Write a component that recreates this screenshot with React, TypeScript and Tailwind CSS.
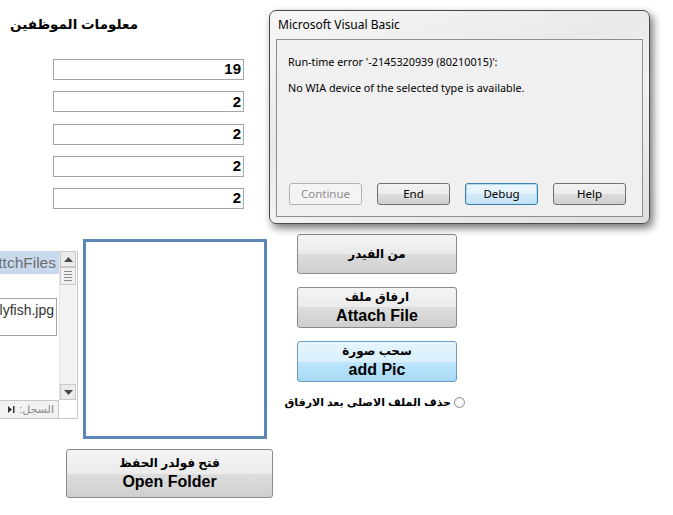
import React from 'react';

const arabic = { fontFamily: '"Liberation Sans", "DejaVu Sans", sans-serif' };
const segoe = { fontFamily: '"Noto Sans", "Open Sans", sans-serif' };

const AccessButton: React.FC<{ ar: string; en?: string; blue?: boolean; className?: string }> = ({ ar, en, blue, className }) => (
    <div
        className={`flex flex-col items-center justify-center rounded-[3px] border leading-none ${
            blue
                ? 'border-[#6a9cc4] bg-[linear-gradient(#e6f5fd_0%,#d9f0fc_50%,#bee6fd_50%,#a7d9f5_100%)]'
                : 'border-[#8a8a8a] bg-[linear-gradient(#f4f4f4_0%,#ebebeb_50%,#dddddd_50%,#cfcfcf_100%)]'
        } ${className ?? ''}`}
        style={arabic}
    >
        <span dir="rtl" className="text-[12px] font-bold text-black">{ar}</span>
        {en && <span className="mt-[5px] text-[16px] font-bold text-black">{en}</span>}
    </div>
);

const DialogButton: React.FC<{ label: string; disabled?: boolean; focused?: boolean }> = ({ label, disabled, focused }) => (
    <div
        className={`flex h-[22px] w-[73px] items-center justify-center rounded-[3px] border text-[11.5px] ${
            disabled
                ? 'border-[#adb2b5] bg-[#f4f4f4] text-[#8d8d8d]'
                : focused
                ? 'border-[#3c7fb1] bg-[linear-gradient(#eaf6fd_0%,#e3f2fb_50%,#d3ebf8_50%,#c4e3f5_100%)] text-black shadow-[inset_0_0_0_1px_#b5dcf0]'
                : 'border-[#707070] bg-[linear-gradient(#f2f2f2_0%,#ebebeb_50%,#dddddd_50%,#cfcfcf_100%)] text-black'
        }`}
    >
        {label}
    </div>
);

export default function App() {
    const values = ['19', '2', '2', '2', '2'];

    return (
        <div className="relative h-[515px] w-[673px] overflow-hidden bg-white">
            {/* Header + fields */}
            <div className="pl-[10px] pt-[14px]">
                <div dir="rtl" className="w-fit text-[13.5px] font-bold leading-[22px] text-black" style={arabic}>
                    معلومات الموظفين
                </div>
            </div>
            <div className="ml-[53px] mt-[23px] flex w-[191px] flex-col gap-[11.25px]">
                {values.map((v, i) => (
                    <div
                        key={i}
                        className="flex h-[21px] items-center justify-end border border-[#a5a5a5] pr-[2px] text-[15px] font-bold text-black"
                        style={arabic}
                    >
                        {v}
                    </div>
                ))}
            </div>

            {/* Lower section */}
            <div className="mt-[25px] flex items-start">
                {/* Subform list */}
                <div className="mt-[17px] flex h-[168px] w-[78px] flex-col border-b border-r border-[#c8c8c8]">
                    <div className="flex flex-1">
                        <div className="flex w-[59px] flex-col">
                            <div className="flex h-[23px] items-center justify-end overflow-hidden whitespace-nowrap bg-[#c8d9ee] pr-[3px] text-[15.5px] text-[#6e6e6e]" style={arabic}>
                                ttchFiles
                            </div>
                            <div className="mt-[24px] flex h-[38px] w-[57px] justify-end overflow-hidden whitespace-nowrap border border-l-0 border-[#a5a5a5] pr-[2px] pt-[1px] text-[14px] text-[#333]" style={arabic}>
                                lyfish.jpg
                            </div>
                        </div>
                        {/* Scrollbar */}
                        <div className="flex w-[17px] flex-col border-l border-[#e4e4e4] bg-[#f3f3f3]">
                            <div className="flex h-[16px] items-center justify-center border border-[#c9c9c9] bg-[#ececec]">
                                <svg width="9" height="5" viewBox="0 0 9 5"><path d="M0 5 L4.5 0 L9 5 Z" fill="#4a4a4a" /></svg>
                            </div>
                            <div className="flex h-[18px] flex-col items-center justify-center gap-[2px] border border-[#c9c9c9] bg-[#f0f0f0]">
                                <div className="h-px w-[8px] bg-[#8a8a8a]" />
                                <div className="h-px w-[8px] bg-[#8a8a8a]" />
                                <div className="h-px w-[8px] bg-[#8a8a8a]" />
                                <div className="h-px w-[8px] bg-[#8a8a8a]" />
                            </div>
                            <div className="flex-1" />
                            <div className="flex h-[16px] items-center justify-center border border-[#c9c9c9] bg-[#ececec]">
                                <svg width="9" height="5" viewBox="0 0 9 5"><path d="M0 0 L4.5 5 L9 0 Z" fill="#4a4a4a" /></svg>
                            </div>
                        </div>
                    </div>
                    <div className="flex h-[18px] w-[59px] items-center justify-end gap-[4px] border-r border-t border-[#c8c8c8] bg-[#f2f2f2] pr-[4px]">
                        <svg width="7" height="7" viewBox="0 0 7 7"><path d="M0 0 L4 3.5 L0 7 Z" fill="#333" /><rect x="5" y="0" width="1.5" height="7" fill="#333" /></svg>
                        <span dir="rtl" className="text-[11px] text-[#8a8a8a]" style={arabic}>السجل:</span>
                    </div>
                </div>

                {/* Picture box */}
                <div className="ml-[5px] mt-[5px] h-[200px] w-[184px] border-[3px] border-[#5b87b5] bg-white" />

                {/* Buttons column */}
                <div className="ml-[18px] flex w-[180px] flex-col">
                    <AccessButton ar="من الفيدر" className="ml-[12px] h-[40px] w-[160px]" />
                    <AccessButton ar="ارفاق ملف" en="Attach File" className="ml-[12px] mt-[13px] h-[41px] w-[160px]" />
                    <AccessButton ar="سحب صورة" en="add Pic" blue className="ml-[12px] mt-[13px] h-[41px] w-[160px]" />
                    <div className="mt-[12px] flex items-center justify-end gap-[3px] whitespace-nowrap">
                        <span dir="rtl" className="text-[11px] font-bold text-black" style={arabic}>حذف الملف الاصلى بعد الارفاق</span>
                        <div className="h-[11px] w-[11px] shrink-0 rounded-full border border-[#8e8f8f] bg-[radial-gradient(#ffffff_30%,#e6e6e6_100%)]" />
                    </div>
                </div>
            </div>

            <AccessButton ar="فتح فولدر الحفظ" en="Open Folder" className="ml-[66px] mt-[10px] h-[49px] w-[207px]" />

            {/* VBA runtime error dialog */}
            <div
                className="absolute left-[269px] top-[10px] h-[214px] w-[381px] rounded-[7px] border border-[#4a4a4a] bg-[linear-gradient(160deg,#f7f7f7_0%,#e9e9e9_40%,#f2f2f2_60%,#dedede_100%)] px-[6px] pb-[6px] shadow-[3px_4px_8px_rgba(0,0,0,0.55)]"
                style={segoe}
            >
                <div className="flex h-[28px] items-center pl-[2px] text-[12px] text-black">Microsoft Visual Basic</div>
                <div className="flex h-[178px] flex-col border border-[#8e8e8e] bg-[#f0f0f0] px-[11px]">
                    <div className="mt-[14px] text-[10.8px] text-black">Run-time error '-2145320939 (80210015)':</div>
                    <div className="mt-[10px] text-[10.8px] text-black">No WIA device of the selected type is available.</div>
                    <div className="mt-auto mb-[11px] ml-[1px] flex gap-[15px]">
                        <DialogButton label="Continue" disabled />
                        <DialogButton label="End" />
                        <DialogButton label="Debug" focused />
                        <DialogButton label="Help" />
                    </div>
                </div>
            </div>
        </div>
    );
}
